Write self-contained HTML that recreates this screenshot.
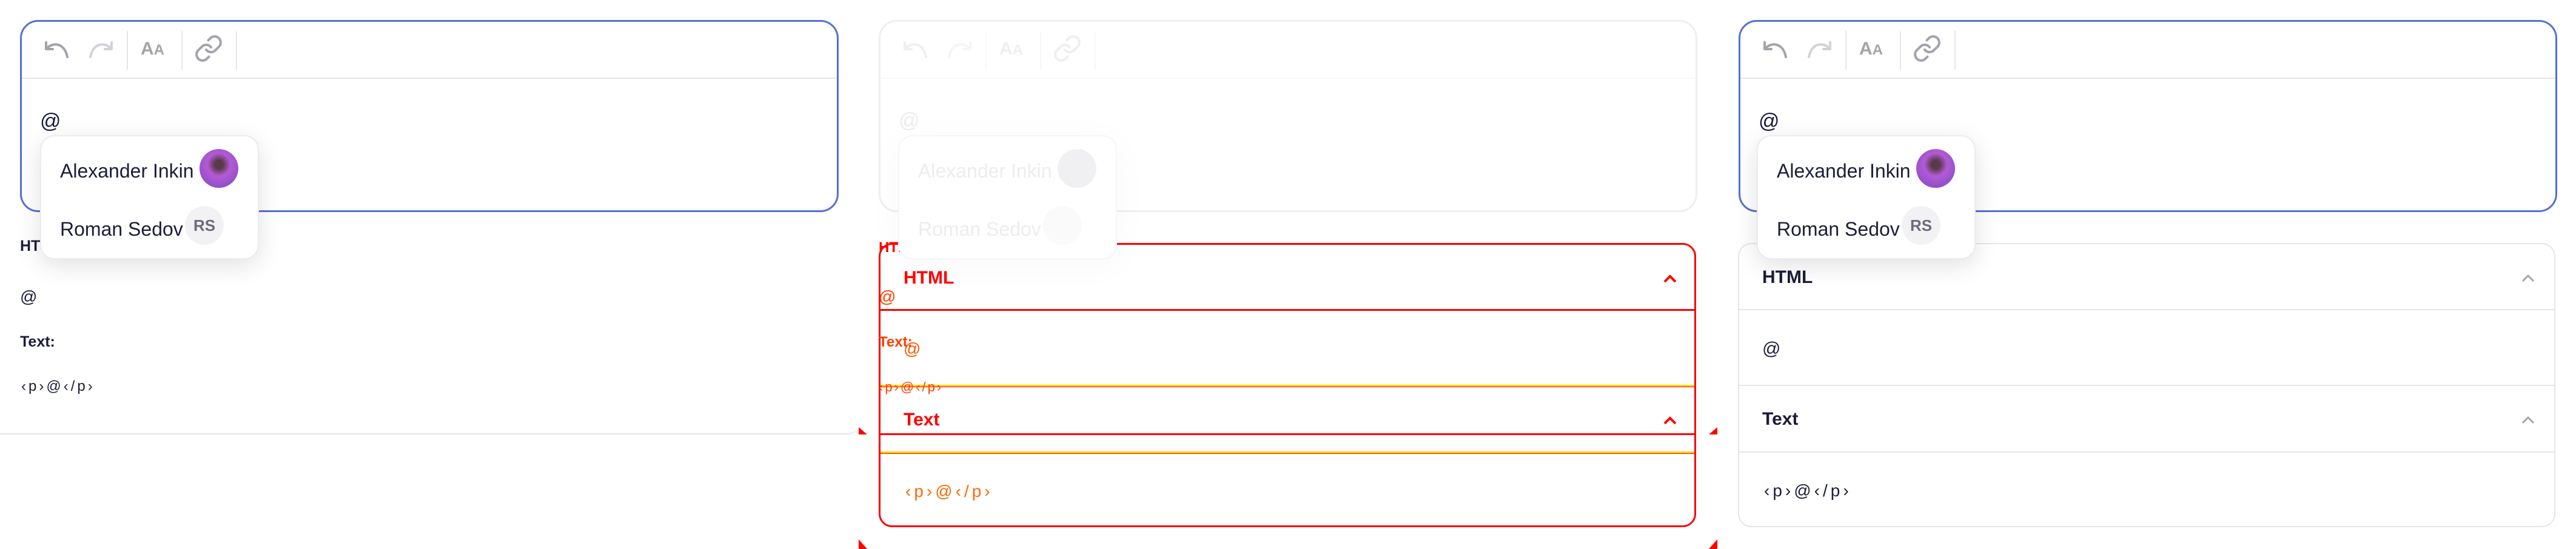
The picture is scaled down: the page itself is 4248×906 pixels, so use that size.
<!DOCTYPE html>
<html><head><meta charset="utf-8">
<style>
*{margin:0;padding:0;box-sizing:border-box}
html,body{width:4248px;height:906px;overflow:hidden;background:#fff;font-family:"Liberation Sans",sans-serif;color:#1b1d3a}
.a{position:absolute}
.ed{position:absolute;top:33px;width:1350px;height:317px;border:3px solid #5470d3;border-radius:30px;background:#fff}
.tb{position:absolute;left:0;right:0;top:92px;height:2px;background:#e6e6ea}
.vs{position:absolute;top:15px;width:2px;height:64px;background:#e6e6ea}
.dd{position:absolute;top:223px;width:361px;height:205px;background:#fff;border:2px solid #ececf0;border-radius:24px;box-shadow:0 10px 40px rgba(0,0,0,.12)}
.nm{position:absolute;left:31px;font-size:32px;white-space:nowrap;color:#1b1d3a}
.av{position:absolute;width:64px;height:64px;border-radius:50%}
.acc{position:absolute;top:401px;width:1348px;height:469px;border:2px solid #e6e6ea;border-radius:22px;background:#fff}
.ln{position:absolute;left:0;right:0;height:2px;background:#e6e6ea}
.h{position:absolute;left:38px;font-weight:bold;font-size:30px}
.mono{letter-spacing:5px;font-size:28px}
</style></head><body>

<div class="a" style="left:-20px;top:-20px;width:1436px;height:737px;border:2px solid #e6e6ea;border-right:none;border-radius:18px;background:#fff"></div>
<div class="a" style="left:33px;top:392px;font-weight:bold;font-size:25px">HTML:</div>
<div class="a" style="left:33px;top:474px;font-size:28px">@</div>
<div class="a" style="left:33px;top:550px;font-weight:bold;font-size:25px">Text:</div>
<div class="a" style="left:35px;top:624px;font-size:24px;letter-spacing:4px">‹p›@‹/p›</div>

<div class="a" style="left:1416px;top:705px;width:14px;height:12px;background:#f00;clip-path:polygon(0 0,0 100%,100% 100%)"></div>
<div class="a" style="left:2818px;top:705px;width:14px;height:12px;background:#f00;clip-path:polygon(100% 0,100% 100%,0 100%)"></div>
<div class="a" style="left:1416px;top:890px;width:14px;height:16px;background:#f00;clip-path:polygon(0 0,0 100%,100% 100%)"></div>
<div class="a" style="left:2818px;top:890px;width:14px;height:16px;background:#f00;clip-path:polygon(100% 0,100% 100%,0 100%)"></div>

<div class="acc" style="left:1449px;border:3px solid #f00;background:transparent">
  <div class="ln" style="top:106px;background:#f00;height:3px"></div>
  <div class="ln" style="top:231px;background:#ffd400;height:3px;box-shadow:0 1px 0 #f00"></div>
  <div class="ln" style="top:311px;background:#f00;height:3px"></div>
  <div class="ln" style="top:341px;background:#ffd400;height:3px;box-shadow:0 1px 0 #f00"></div>
  <div class="h" style="top:38px;color:#f00">HTML</div>
  <div class="a" style="left:38px;top:156px;font-size:28px;color:#ff5a00">@</div>
  <div class="h" style="top:272px;color:#f00">Text</div>
  <div class="a mono" style="left:41px;top:391px;color:#ff6a00">‹p›@‹/p›</div>
  <svg class="a" style="left:1291px;top:49px" width="22" height="14"><path d="M2 12 L11 3 L20 12" fill="none" stroke="#f00" stroke-width="4"/></svg>
  <svg class="a" style="left:1291px;top:283px" width="22" height="14"><path d="M2 12 L11 3 L20 12" fill="none" stroke="#f00" stroke-width="4"/></svg>
</div>
<div class="a" style="left:1449px;top:395px;font-weight:bold;font-size:24px;color:#f00">HTML:</div>
<div class="a" style="left:1449px;top:474px;font-size:28px;color:#ff4000">@</div>
<div class="a" style="left:1449px;top:551px;font-weight:bold;font-size:24px;color:#ff4000">Text:</div>
<div class="a" style="left:1449px;top:626px;font-size:22px;letter-spacing:3px;color:#ff4000">‹p›@‹/p›</div>

<div class="ed" style="left:1449px;border-color:#efeff1;background:transparent">
  <div class="tb" style="background:#f7f7f8"></div>
  <div class="vs" style="left:173px;background:#f7f7f8"></div><div class="vs" style="left:263px;background:#f7f7f8"></div><div class="vs" style="left:353px;background:#f7f7f8"></div>
  <svg class="a" style="left:36px;top:31px" width="44" height="30"><path d="M4 3 V14 H15" fill="none" stroke="#efeff1" stroke-width="4" stroke-linecap="round" stroke-linejoin="round"/><path d="M5 13 C14 3 34 2 39 27" fill="none" stroke="#efeff1" stroke-width="4" stroke-linecap="round"/></svg>
  <svg class="a" style="left:108px;top:31px" width="44" height="30"><g transform="translate(44,0) scale(-1,1)"><path d="M4 3 V14 H15" fill="none" stroke="#f5f5f6" stroke-width="4" stroke-linecap="round" stroke-linejoin="round"/><path d="M5 13 C14 3 34 2 39 27" fill="none" stroke="#f5f5f6" stroke-width="4" stroke-linecap="round"/></g></svg>
  <div class="a" style="left:196px;top:28px;font-weight:bold;font-size:30px;color:#efeff1">A<span style="font-size:24px">A</span></div>
  <svg class="a" style="left:284px;top:20px" width="48" height="48" viewBox="0 0 24 24"><path d="M10 13a5 5 0 0 0 7.54.54l3-3a5 5 0 0 0-7.07-7.07l-1.72 1.71" fill="none" stroke="#efeff1" stroke-width="2" stroke-linecap="round"/><path d="M14 11a5 5 0 0 0-7.54-.54l-3 3a5 5 0 0 0 7.07 7.07l1.71-1.71" fill="none" stroke="#efeff1" stroke-width="2" stroke-linecap="round"/></svg>
</div>
<div class="a" style="left:1482px;top:180px;font-size:34px;color:#ededf0">@</div>
<div class="dd" style="left:1481px;box-shadow:0 10px 60px rgba(0,0,0,.03);border-color:#f6f6f7">
  <div class="nm" style="top:39px;color:#ededf0">Alexander Inkin</div>
  <div class="av" style="left:261px;top:21px;background:#f0f0f2"></div>
  <div class="nm" style="top:135px;color:#ededf0">Roman Sedov</div>
  <div class="av" style="left:237px;top:115px;background:#fafafa"></div>
</div>

<div class="acc" style="left:2866px">
  <div class="ln" style="top:107px"></div>
  <div class="ln" style="top:232px"></div>
  <div class="ln" style="top:342px"></div>
  <div class="h" style="top:38px">HTML</div>
  <div class="a" style="left:38px;top:156px;font-size:30px">@</div>
  <div class="h" style="top:272px">Text</div>
  <div class="a mono" style="left:41px;top:391px">‹p›@‹/p›</div>
  <svg class="a" style="left:1290px;top:49px" width="22" height="14"><path d="M2 12 L11 3 L20 12" fill="none" stroke="#a5a5b0" stroke-width="3"/></svg>
  <svg class="a" style="left:1290px;top:283px" width="22" height="14"><path d="M2 12 L11 3 L20 12" fill="none" stroke="#a5a5b0" stroke-width="3"/></svg>
</div>

<div class="ed" style="left:33px">
  <div class="tb"></div>
  <div class="vs" style="left:173px"></div><div class="vs" style="left:263px"></div><div class="vs" style="left:353px"></div>
  <svg class="a" style="left:36px;top:31px" width="44" height="30"><path d="M4 3 V14 H15" fill="none" stroke="#a3a3ad" stroke-width="4" stroke-linecap="round" stroke-linejoin="round"/><path d="M5 13 C14 3 34 2 39 27" fill="none" stroke="#a3a3ad" stroke-width="4" stroke-linecap="round"/></svg>
  <svg class="a" style="left:108px;top:31px" width="44" height="30"><g transform="translate(44,0) scale(-1,1)"><path d="M4 3 V14 H15" fill="none" stroke="#d2d2d8" stroke-width="4" stroke-linecap="round" stroke-linejoin="round"/><path d="M5 13 C14 3 34 2 39 27" fill="none" stroke="#d2d2d8" stroke-width="4" stroke-linecap="round"/></g></svg>
  <div class="a" style="left:196px;top:28px;font-weight:bold;font-size:30px;color:#a3a3ad">A<span style="font-size:24px">A</span></div>
  <svg class="a" style="left:284px;top:20px" width="48" height="48" viewBox="0 0 24 24"><path d="M10 13a5 5 0 0 0 7.54.54l3-3a5 5 0 0 0-7.07-7.07l-1.72 1.71" fill="none" stroke="#a3a3ad" stroke-width="2" stroke-linecap="round"/><path d="M14 11a5 5 0 0 0-7.54-.54l-3 3a5 5 0 0 0 7.07 7.07l1.71-1.71" fill="none" stroke="#a3a3ad" stroke-width="2" stroke-linecap="round"/></svg>
  <div class="a" style="left:30px;top:145px;font-size:34px">@</div>
</div>
<div class="dd" style="left:66px">
  <div class="nm" style="top:39px">Alexander Inkin</div>
  <div class="av" style="left:261px;top:21px;background:radial-gradient(circle at 50% 40%,#5a3a4a 0 14%,#b35ad6 38%,#7a48c0 100%)"></div>
  <div class="nm" style="top:135px">Roman Sedov</div>
  <div class="av" style="left:237px;top:115px;background:#f2f2f4;font-weight:bold;font-size:26px;color:#6b6b7b;text-align:center;line-height:64px">RS</div>
</div>

<div class="ed" style="left:2867px">
  <div class="tb"></div>
  <div class="vs" style="left:173px"></div><div class="vs" style="left:263px"></div><div class="vs" style="left:353px"></div>
  <svg class="a" style="left:36px;top:31px" width="44" height="30"><path d="M4 3 V14 H15" fill="none" stroke="#a3a3ad" stroke-width="4" stroke-linecap="round" stroke-linejoin="round"/><path d="M5 13 C14 3 34 2 39 27" fill="none" stroke="#a3a3ad" stroke-width="4" stroke-linecap="round"/></svg>
  <svg class="a" style="left:108px;top:31px" width="44" height="30"><g transform="translate(44,0) scale(-1,1)"><path d="M4 3 V14 H15" fill="none" stroke="#d2d2d8" stroke-width="4" stroke-linecap="round" stroke-linejoin="round"/><path d="M5 13 C14 3 34 2 39 27" fill="none" stroke="#d2d2d8" stroke-width="4" stroke-linecap="round"/></g></svg>
  <div class="a" style="left:196px;top:28px;font-weight:bold;font-size:30px;color:#a3a3ad">A<span style="font-size:24px">A</span></div>
  <svg class="a" style="left:284px;top:20px" width="48" height="48" viewBox="0 0 24 24"><path d="M10 13a5 5 0 0 0 7.54.54l3-3a5 5 0 0 0-7.07-7.07l-1.72 1.71" fill="none" stroke="#a3a3ad" stroke-width="2" stroke-linecap="round"/><path d="M14 11a5 5 0 0 0-7.54-.54l-3 3a5 5 0 0 0 7.07 7.07l1.71-1.71" fill="none" stroke="#a3a3ad" stroke-width="2" stroke-linecap="round"/></svg>
  <div class="a" style="left:30px;top:145px;font-size:34px">@</div>
</div>
<div class="dd" style="left:2897px">
  <div class="nm" style="top:39px">Alexander Inkin</div>
  <div class="av" style="left:261px;top:21px;background:radial-gradient(circle at 50% 40%,#5a3a4a 0 14%,#b35ad6 38%,#7a48c0 100%)"></div>
  <div class="nm" style="top:135px">Roman Sedov</div>
  <div class="av" style="left:237px;top:115px;background:#f2f2f4;font-weight:bold;font-size:26px;color:#6b6b7b;text-align:center;line-height:64px">RS</div>
</div>

</body></html>
